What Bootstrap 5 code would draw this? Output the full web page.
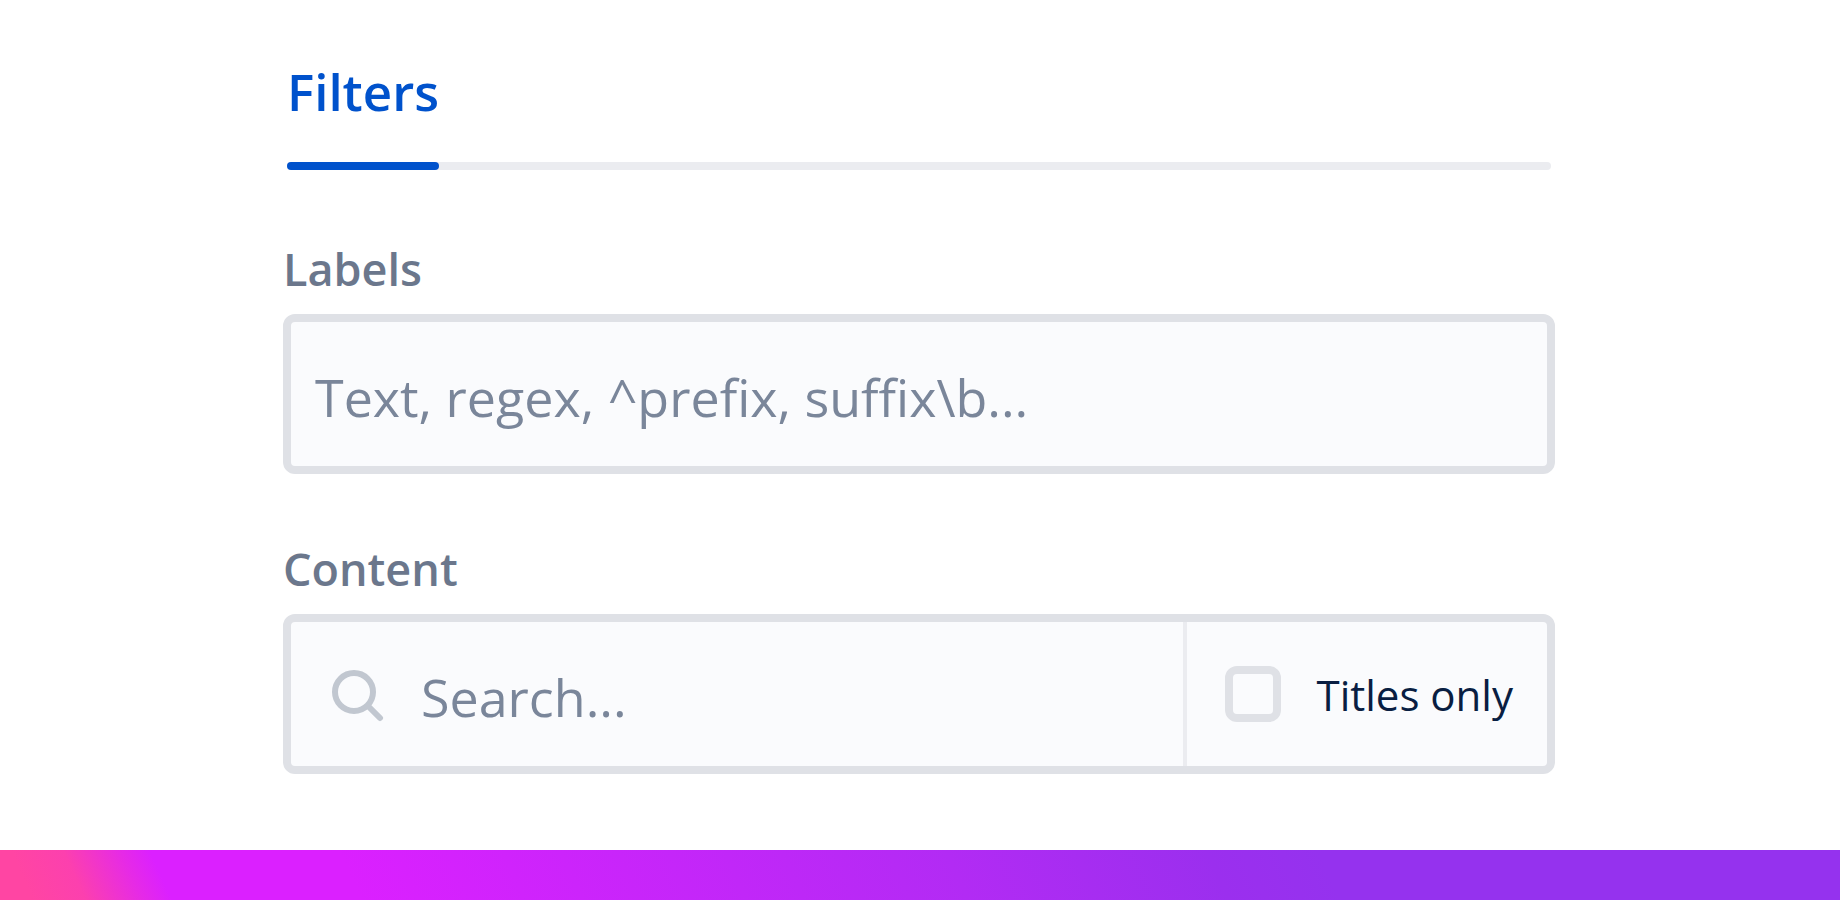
<!DOCTYPE html>
<html lang="en">
<head>
<meta charset="utf-8">
<meta name="viewport" content="width=device-width, initial-scale=1">
<title>Filters</title>
<link href="https://cdn.jsdelivr.net/npm/bootstrap@5.3.0/dist/css/bootstrap.min.css" rel="stylesheet">
<style>
  body { font-family: "Segoe UI", "Open Sans", "Noto Sans", sans-serif; background: #fff; color: #091e42; }
  .panel { width: 100%; max-width: 1274px; padding: 56px 2px 0 0; }
  .tab-track { margin: 0 4px; height: 8px; border-radius: 4px; background: #ebecf0; }
  .tab-line { margin: 0 4px; }
  .tab-item { color: #0052cc; font-size: 51px; line-height: 70px; font-weight: 600; padding-bottom: 36px; }
  .tab-item::after { content: ""; position: absolute; left: 0; right: 0; bottom: -8px; height: 8px; border-radius: 4px; background: #0052cc; }
  .filter-form { padding-top: 67px; }
  .field-group + .field-group { margin-top: 63px; }
  .field-label { font-size: 45px; line-height: 64px; font-weight: 600; color: #6b778c; margin-bottom: 13px; }
  .field-box { height: 160px; border: 8px solid #dfe1e6; border-radius: 12px; background: #fafbfd; }
  .field-box:focus-within { border-color: #4c9aff; }
  .field-box .form-control { height: 144px; padding: 4px 24px 0; font-size: 52px; line-height: 72px; color: #091e42; border: 0; background: transparent; box-shadow: none; }
  .field-box .form-control::placeholder { color: #7a869a; opacity: 1; }
  .field-box .search-input { padding-left: 36px; }
  .search-icon { width: 56px; height: 56px; margin-left: 38px; }
  .titles-only { border-left: 4px solid #ebecf0; padding: 0 34px 0 38px; gap: 36px; }
  .titles-only .form-check-input { width: 56px; height: 56px; margin: 0; border: 8px solid #dfe1e6; border-radius: 12px; }
  .titles-only .form-check-input:not(:checked) { background-color: #fafbfd; }
  .titles-only label { font-size: 42px; line-height: 64px; padding-top: 2px; white-space: nowrap; }
  .spectrum { height: 50px; background: linear-gradient(66deg, #ff45a3 30px, #fc40ae 78px, #e62ae6 130px, #db20ff 157px, #db20ff 330px, #b22bf4 52%, #9b2fee 66%, #9532ee 72%); }
</style>
</head>
<body class="min-vh-100 d-flex flex-column">
<main class="panel mx-auto">
  <nav class="tab-line d-flex" aria-label="Panel tabs">
    <a class="tab-item position-relative text-decoration-none" href="#filters">Filters</a>
  </nav>
  <div class="tab-track"></div>
  <form class="filter-form" id="filters">
    <div class="field-group">
      <label class="field-label d-block" for="labels">Labels</label>
      <div class="field-box"><input class="form-control" id="labels" type="text" placeholder="Text, regex, ^prefix, suffix\b..."></div>
    </div>
    <div class="field-group">
      <label class="field-label d-block" for="content">Content</label>
      <div class="field-box d-flex align-items-stretch">
        <div class="d-flex align-items-center flex-grow-1">
          <svg class="search-icon flex-shrink-0" viewBox="0 0 56 56" fill="none" stroke="#c1c7d0" stroke-width="6" stroke-linecap="round" aria-hidden="true"><circle cx="25" cy="26" r="19"/><path d="M39 40 51 52"/></svg>
          <input class="form-control search-input" id="content" type="text" placeholder="Search...">
        </div>
        <div class="titles-only d-flex align-items-center">
          <input class="form-check-input" id="titles" type="checkbox">
          <label for="titles">Titles only</label>
        </div>
      </div>
    </div>
  </form>
</main>
<footer class="spectrum mt-auto"></footer>
<script src="https://cdn.jsdelivr.net/npm/bootstrap@5.3.0/dist/js/bootstrap.bundle.min.js"></script>
</body>
</html>
